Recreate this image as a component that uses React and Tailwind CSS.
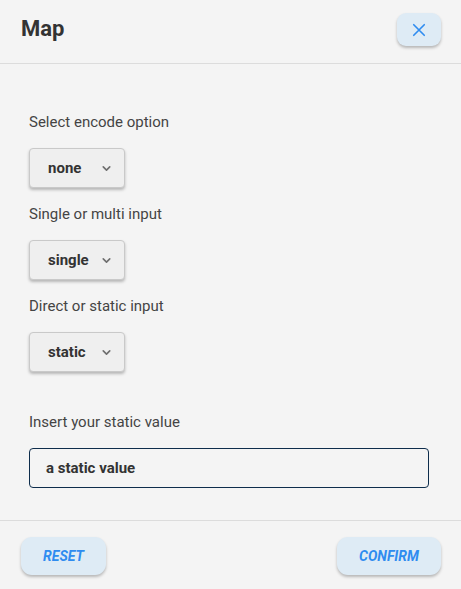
import {useState} from 'react'

function Chevron() {
  return (
    <svg width="13" height="13" viewBox="0 0 24 24" fill="none" stroke="#6f6f6f" strokeWidth="3" strokeLinecap="round" strokeLinejoin="round">
      <path d="M6 9l6 6 6-6" />
    </svg>
  )
}

function SelectBox({value}) {
  return (
    <button className="w-[96px] h-[40px] flex items-center justify-between pl-[18px] pr-[11px] bg-[#efefef] border border-[#c9c9c9] rounded-[4px] shadow-[0_2px_3px_rgba(0,0,0,0.25)] text-[15px] font-bold text-[#333]">
      <span>{value}</span>
      <Chevron />
    </button>
  )
}

export default function App() {
  const [staticValue, setStaticValue] = useState('a static value')

  return (
    <div className="w-[461px] h-[589px] bg-[#f4f4f4] flex flex-col text-[#444]" style={{fontFamily: 'Roboto, "Liberation Sans", sans-serif'}}>
      <div className="h-[63px] flex items-center justify-between pl-[21px] pr-[20px] border-b border-[#dcdcdc] box-content">
        <h1 className="text-[22px] font-bold text-[#333] mt-[-7px]">Map</h1>
        <button className="w-[44px] h-[33px] mt-[-4px] flex items-center justify-center rounded-[9px] bg-[#deebf5] shadow-[0_2px_3px_rgba(0,0,0,0.25)]">
          <svg width="18" height="18" viewBox="0 0 24 24" fill="none" stroke="#2f8cf0" strokeWidth="2.2" strokeLinecap="round">
            <path d="M5 5l14 14M19 5L5 19" />
          </svg>
        </button>
      </div>

      <div className="flex-1 flex flex-col pl-[29px] pr-[32px] pt-[48px]">
        <p className="text-[15px] leading-[20px]">Select encode option</p>
        <div className="mt-[16px]"><SelectBox value="none" /></div>
        <p className="text-[15px] leading-[20px] mt-[16px]">Single or multi input</p>
        <div className="mt-[16px]"><SelectBox value="single" /></div>
        <p className="text-[15px] leading-[20px] mt-[16px]">Direct or static input</p>
        <div className="mt-[16px]"><SelectBox value="static" /></div>
        <p className="text-[15px] leading-[20px] mt-[40px]">Insert your static value</p>
        <input
          value={staticValue}
          onChange={(e) => setStaticValue(e.target.value)}
          className="mt-[16px] w-[400px] h-[40px] px-[16px] bg-[#f4f4f4] border border-[#0e2d4c] rounded-[4px] text-[15px] font-bold text-[#333] outline-none"
        />
      </div>

      <div className="h-[69px] border-t border-[#dcdcdc] flex items-start justify-between pl-[21px] pr-[20px] pt-[16px]">
        <button className="w-[85px] h-[38px] rounded-[11px] bg-[#deebf5] shadow-[0_2px_3px_rgba(0,0,0,0.25)] text-[14px] font-bold italic text-[#2f8cf0]">
          RESET
        </button>
        <button className="w-[104px] h-[38px] rounded-[11px] bg-[#deebf5] shadow-[0_2px_3px_rgba(0,0,0,0.25)] text-[14px] font-bold italic text-[#2f8cf0]">
          CONFIRM
        </button>
      </div>
    </div>
  )
}
